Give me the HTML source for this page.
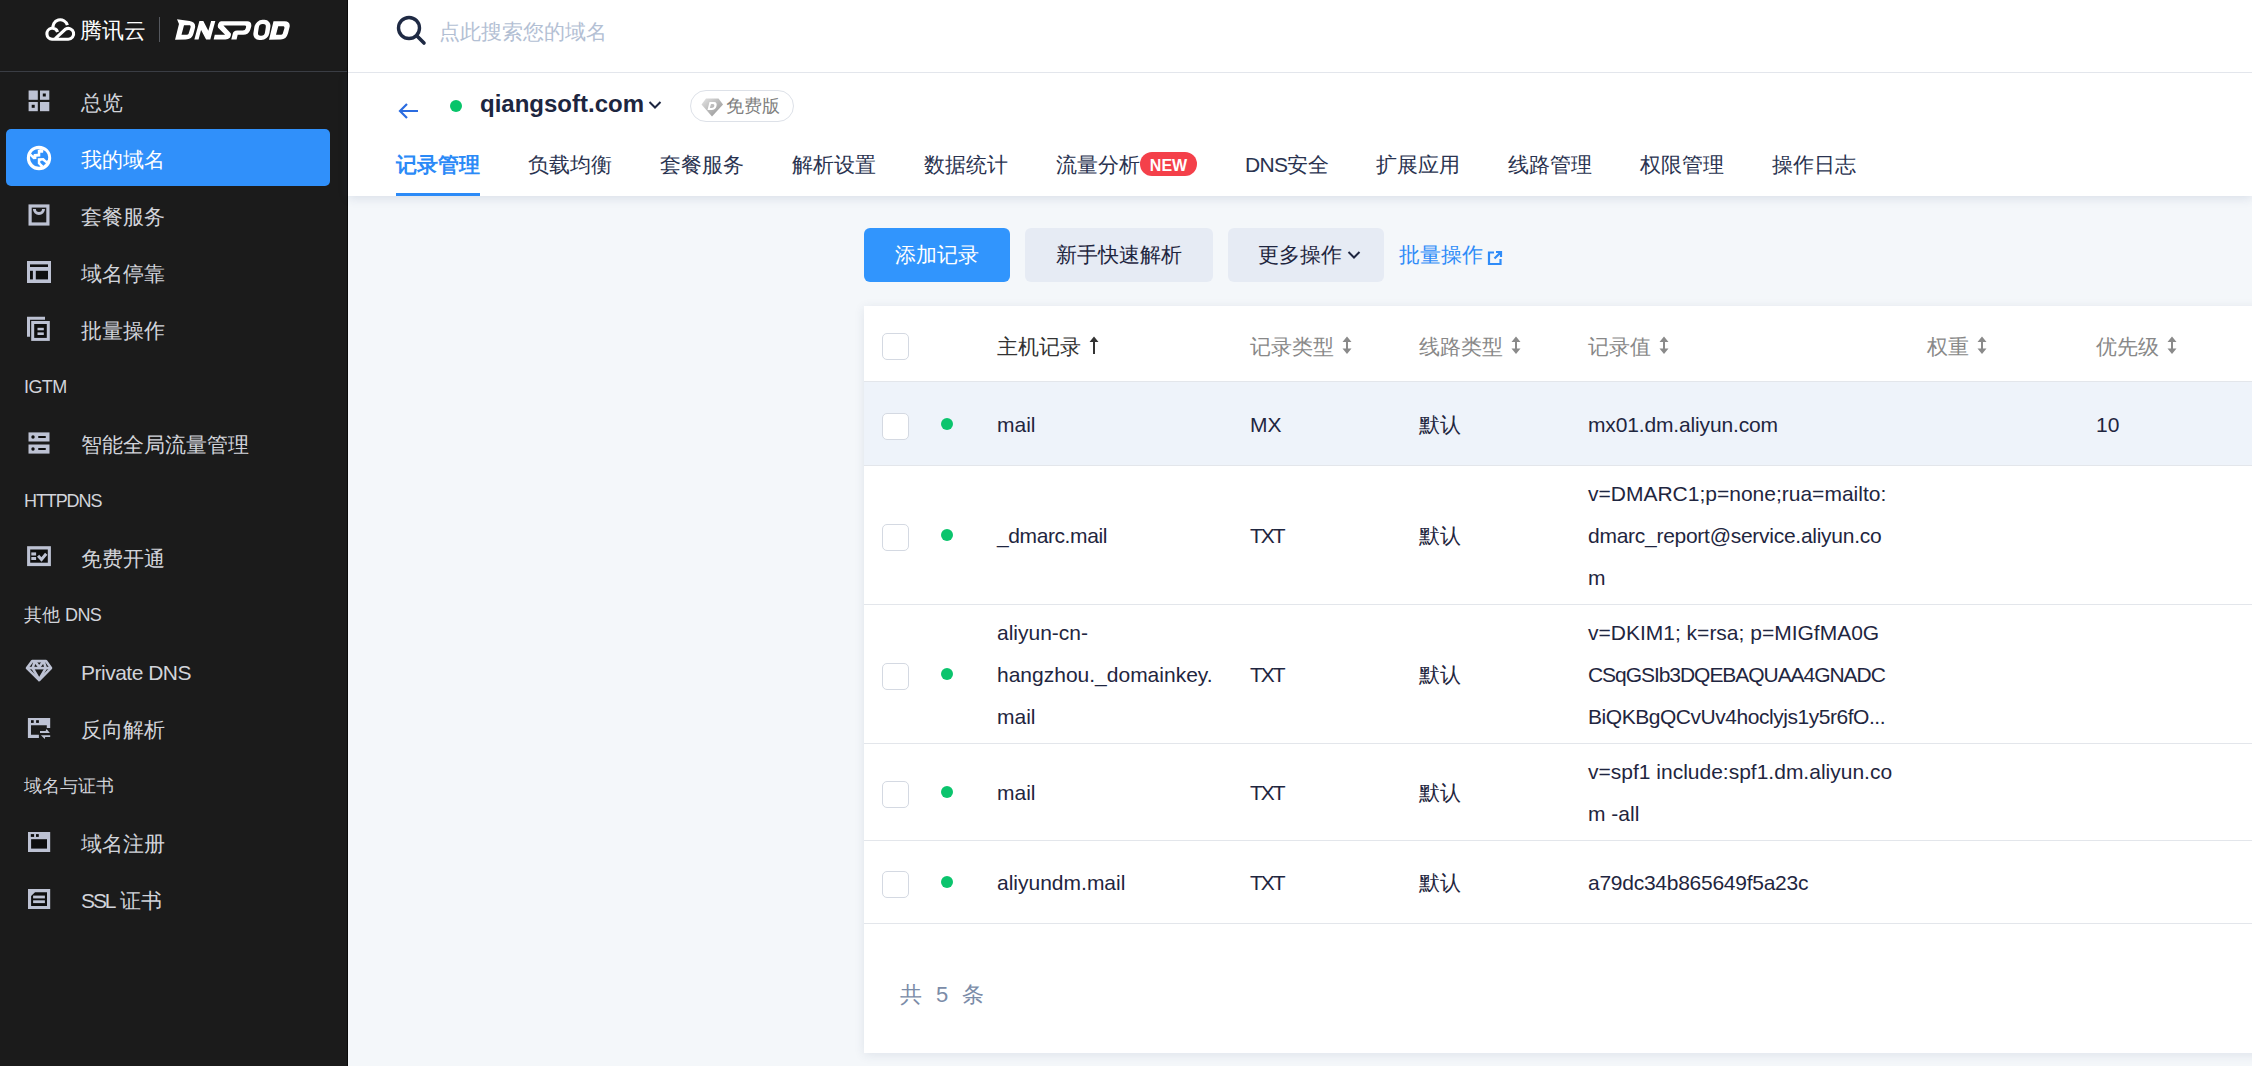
<!DOCTYPE html>
<html><head><meta charset="utf-8">
<style>
*{box-sizing:border-box;margin:0;padding:0}
html,body{width:2252px;height:1066px;overflow:hidden;background:#f4f7fa;font-family:"Liberation Sans",sans-serif}
.abs{position:absolute}
#side{position:absolute;left:0;top:0;width:348px;height:1066px;background:#1b1b1b;border-right:1px solid #0a0a0a}
#side .logo{position:absolute;left:0;top:0;width:347px;height:72px;border-bottom:1px solid #3a3d44}
.mi{position:absolute;left:6px;width:324px;height:57px;color:#d2d4da;font-size:21px;line-height:57px}
.mi .t{position:absolute;left:75px;top:2px}
.mi svg{position:absolute;left:20px;top:17px}
.mi.act{background:#3090fa;border-radius:5px;color:#fff}
.sec{position:absolute;left:24px;height:57px;line-height:61px;color:#d2d4da;font-size:18px}
#top{position:absolute;z-index:2;left:348px;top:0;right:0;height:73px;background:#fff;border-bottom:1px solid #e3e6ec}
#hdr{position:absolute;left:348px;top:73px;right:0;height:123px;background:#fff;box-shadow:0 2px 10px rgba(50,70,120,.14)}
.tab{position:absolute;top:72px;font-size:21px;color:#2a3350;line-height:40px;white-space:nowrap}
.tab.act{color:#2b8af7;font-weight:bold}

.btn{position:absolute;top:228px;height:54px;border-radius:6px;font-size:21px;line-height:54px;white-space:nowrap}
#card{position:absolute;left:864px;top:306px;width:1400px;height:747px;background:#fff;box-shadow:0 2px 10px rgba(40,60,100,.10)}
.hl{position:absolute;left:0;right:0;height:1px;background:#e3e6eb}
.cb{position:absolute;left:18px;width:27px;height:27px;border:1px solid #d4d9e2;border-radius:5px;background:#fff}
.dot{position:absolute;left:77px;width:12px;height:12px;border-radius:50%;background:#0bc46d}
.th{position:absolute;top:25px;font-size:21px;line-height:32px;color:#888;white-space:nowrap}
.td{position:absolute;font-size:21px;line-height:42px;color:#1f2640;white-space:nowrap}
.srt{display:inline-block;vertical-align:top;margin-left:8px;margin-top:5px}
</style></head><body>
<div id="side">
 <div class="logo">
  <svg class="abs" style="left:40px;top:14px" width="40" height="32" viewBox="0 0 40 32"><path d="M17.6 17.9 A5.5 5.5 0 1 0 12 25.2 L28.2 25.2 A5.4 5.4 0 1 0 25.6 15.1 L15.2 24.6 M13.2 15.2 A7.3 7.3 0 1 1 27.4 11.2" fill="none" stroke="#fff" stroke-width="3.1"/></svg>
  <div class="abs" style="left:80px;top:15px;color:#fff;font-size:22px;line-height:32px">腾讯云</div>
  <div class="abs" style="left:159px;top:17px;width:1px;height:25px;background:#55585e"></div>
  <svg class="abs" style="left:170px;top:12px" width="126" height="34" viewBox="0 0 2252 608"><path fill="#fff" fill-rule="evenodd" d="M125,128 L350,160 Q470,180 445,290 L420,385 Q395,490 280,492 L90,495 L160,215 Z M250,235 L355,235 Q375,240 365,280 L330,395 Q320,405 300,405 L205,405 Z
M435,492 L525,162 L595,162 L685,335 L735,162 L810,162 L720,492 L645,492 L555,320 L510,492 Z
M915,165 L1160,165 L1140,240 L955,240 L1085,380 Q1100,410 1070,460 Q1040,492 990,492 L780,492 L800,405 L985,405 L860,280 Q845,250 865,205 Q885,165 915,165 Z
M1160,165 L1380,165 Q1470,170 1450,270 L1430,330 Q1400,405 1310,405 L1210,405 L1190,492 L1095,492 L1120,395 Q1130,330 1200,330 L1300,330 Q1345,330 1355,290 L1360,265 Q1365,240 1335,240 L1140,240 Z
M1850,165 L2050,165 Q2150,170 2140,260 L2110,380 Q2080,492 1980,492 L1770,495 Z M1935,255 L2030,255 Q2050,260 2045,290 L2015,390 Q2005,405 1985,405 L1895,405 Z"/><g transform="translate(1643,320) skewX(-9)"><rect x="-143" y="-180" width="286" height="360" rx="125" fill="#fff"/><rect x="-62" y="-104" width="124" height="208" rx="58" fill="#1b1b1b"/></g></svg>
 </div>
  <div class="mi" style="top:72px"><span class="t">总览</span></div>
 <div class="mi act" style="top:129px"><span class="t">我的域名</span></div>
 <div class="mi" style="top:186px"><span class="t">套餐服务</span></div>
 <div class="mi" style="top:243px"><span class="t">域名停靠</span></div>
 <div class="mi" style="top:300px"><span class="t">批量操作</span></div>
 <div class="sec" style="top:357px" ><span style="letter-spacing:-0.6px">IGTM</span></div>
 <div class="mi" style="top:414px"><span class="t">智能全局流量管理</span></div>
 <div class="sec" style="top:471px"><span style="letter-spacing:-1.1px">HTTPDNS</span></div>
 <div class="mi" style="top:528px"><span class="t">免费开通</span></div>
 <div class="sec" style="top:585px">其他 <span style="letter-spacing:-0.6px">DNS</span></div>
 <div class="mi" style="top:642px"><span class="t" style="letter-spacing:-0.5px">Private DNS</span></div>
 <div class="mi" style="top:699px"><span class="t">反向解析</span></div>
 <div class="sec" style="top:756px">域名与证书</div>
 <div class="mi" style="top:813px"><span class="t">域名注册</span></div>
 <div class="mi" style="top:870px"><span class="t"><span style="letter-spacing:-2.1px">SSL</span> 证书</span></div>
<svg class="abs" style="left:0;top:0" width="348" height="1066" viewBox="0 0 348 1066">
<g fill="#bdc2d3">
 <rect x="28.6" y="90.5" width="9.2" height="9.3"/><rect x="40" y="90.5" width="9.3" height="9.3"/><rect x="28.6" y="102" width="9.2" height="9.2"/><rect x="40" y="102" width="9.3" height="9.2"/>
</g>
<rect x="42.8" y="93.5" width="3" height="3" fill="#0e0e0e"/><rect x="31.7" y="104.8" width="3" height="3" fill="#0e0e0e"/>
<circle cx="39" cy="158" r="10.6" fill="none" stroke="#fff" stroke-width="3.2"/>
<circle cx="39" cy="158" r="9.3" fill="#fff"/>
<g transform="translate(24,143)" fill="#3090fa">
 <path d="M7,10.4 L9.3,12.7 L9.9,11 L13.8,10.7 L13.8,7 L16.6,6.5 A9 9 0 0 0 7,10.4 Z"/>
 <path d="M19.4,7 L19.1,9.85 L16.3,9.7 L16.3,13.5 L12.4,13.8 L12.4,16 L9.3,16.2 L6.2,12.9 A9 9 0 0 0 16.6,23.6 L13.8,20.8 L13.8,15.2 L19.7,14.9 L22.5,17.7 L23.9,16.9 A9 9 0 0 0 19.4,7 Z"/>
 <path d="M16.3,18 L18.3,17.5 L22,20.3 L19.4,22.8 L16.3,19.7 Z"/>
</g>
<rect x="30.1" y="206" width="17.8" height="18" fill="none" stroke="#bdc2d3" stroke-width="3.2"/>
<path d="M34.4,209 A4.55 4.55 0 0 0 43.5,209" fill="none" stroke="#bdc2d3" stroke-width="3"/>
<rect x="27" y="261" width="24" height="22" fill="#bdc2d3"/>
<rect x="30" y="264.4" width="18" height="2.6" fill="#0e0e0e"/>
<rect x="30" y="270.8" width="2.9" height="8.6" fill="#0e0e0e"/>
<rect x="35.8" y="270.8" width="12.2" height="8.6" fill="#0e0e0e"/>
<path d="M28.5,336.7 V318.3 H45" fill="none" stroke="#bdc2d3" stroke-width="3"/>
<rect x="32.7" y="322.5" width="15.6" height="16.9" fill="#0e0e0e" stroke="#bdc2d3" stroke-width="3"/>
<rect x="37.5" y="327.8" width="6.3" height="2.5" fill="#bdc2d3"/><rect x="37.5" y="332.4" width="6.3" height="2.6" fill="#bdc2d3"/>
<rect x="28.5" y="432.4" width="21" height="9.1" fill="#bdc2d3"/><rect x="28.5" y="444.5" width="21" height="9.1" fill="#bdc2d3"/>
<circle cx="33" cy="437" r="1.7" fill="#0e0e0e"/><circle cx="33" cy="449" r="1.7" fill="#0e0e0e"/>
<rect x="38" y="436" width="8" height="2" rx="1" fill="#0e0e0e"/><rect x="38" y="448" width="8" height="2" rx="1" fill="#0e0e0e"/>
<rect x="27.1" y="546.2" width="23.8" height="19.9" fill="#bdc2d3"/>
<rect x="30.2" y="549.5" width="17.6" height="13.2" fill="#0e0e0e"/>
<rect x="31.3" y="552.4" width="4.8" height="3.1" fill="#bdc2d3"/><rect x="31.3" y="557" width="4.8" height="3" fill="#bdc2d3"/>
<path d="M38.1,555.8 L41.5,559.5 L46.2,553.8" fill="none" stroke="#bdc2d3" stroke-width="3"/>
<g transform="translate(24,656)" fill="none" stroke="#bdc2d3" stroke-width="2.6" stroke-linejoin="round">
 <path d="M8.2,5.1 H22 L27,12.1 L15.2,24.2 L3,12.1 Z"/>
 <path d="M3.5,12.1 H26.5"/>
 <path d="M10.8,5.1 L8.6,12.1 L15.2,23.5 L21.8,12.1 L19.6,5.1 M10.8,5.1 L15.2,11 L19.6,5.1"/>
</g>
<g transform="translate(24,713)">
 <path d="M3.9,4.9 H26.2 V14.9 H22.8 V12.2 H7 V21.7 H14.9 V24.9 H3.9 Z" fill="#bdc2d3"/>
 <rect x="7" y="7.2" width="2.7" height="2.7" fill="#0e0e0e"/><rect x="12.1" y="7.2" width="2.8" height="2.7" fill="#0e0e0e"/>
 <path d="M16,18 H21.6 L22.5,15.9 L25.9,19.9 H16 Z" fill="#bdc2d3"/>
 <path d="M16.9,22.2 H26.2 V23.9 H21.2 L20.8,25.9 Z" fill="#bdc2d3"/>
</g>
<rect x="28" y="832" width="22.2" height="20" fill="#bdc2d3"/>
<rect x="31.1" y="839.2" width="15.9" height="9.4" fill="#0e0e0e"/>
<rect x="30.8" y="834.1" width="3.3" height="2.8" fill="#0e0e0e"/><rect x="36" y="834.1" width="2.8" height="2.8" fill="#0e0e0e"/>
<rect x="28" y="889" width="22.2" height="20" fill="#bdc2d3"/>
<path d="M31.1,896 L35,892.3 H47 V905.9 H31.1 Z" fill="#0e0e0e"/>
<rect x="33.1" y="895.6" width="11.8" height="2.8" fill="#bdc2d3"/><rect x="33.1" y="900.3" width="11.8" height="2.8" fill="#bdc2d3"/>
</svg>
</div>

<div id="top">
 <svg class="abs" style="left:48px;top:15px" width="32" height="32" viewBox="0 0 32 32"><circle cx="13" cy="13" r="10.5" fill="none" stroke="#1f2a44" stroke-width="3.4"/><path d="M21 21 L28 28" stroke="#1f2a44" stroke-width="3.6" stroke-linecap="round"/></svg>
 <div class="abs" style="left:91px;top:17px;font-size:21px;line-height:30px;color:#b3c0d4">点此搜索您的域名</div>
</div>

<div id="hdr">
 <svg class="abs" style="left:50px;top:29px" width="22" height="18" viewBox="0 0 22 18"><path d="M2 9 H20 M9 2 L2 9 L9 16" fill="none" stroke="#2b6ce0" stroke-width="2.2"/></svg>
 <div class="abs" style="left:102px;top:27px;width:12px;height:12px;border-radius:50%;background:#08c46a"></div>
 <div class="abs" style="left:132px;top:14px;font-size:24px;line-height:34px;font-weight:bold;color:#1d2640">qiangsoft.com</div>
 <svg class="abs" style="left:300px;top:27px" width="14" height="10" viewBox="0 0 14 10"><path d="M1.5 2 L7 7.5 L12.5 2" fill="none" stroke="#1d2640" stroke-width="2"/></svg>
 <div class="abs" style="left:342px;top:17px;width:104px;height:32px;border:1px solid #dde1e8;border-radius:16px"></div>
 <svg class="abs" style="left:353px;top:25px" width="23" height="19" viewBox="0 0 23 19"><defs><linearGradient id="dg" x1="0" y1="0" x2="1" y2="1"><stop offset="0" stop-color="#e4e4e4"/><stop offset="1" stop-color="#8e8e8e"/></linearGradient></defs><path d="M5 0.5 H17.5 L22 6.5 L11 18.5 L0.5 6.5 Z" fill="url(#dg)"/><path d="M8.5 4 H13 C15.5 4 16 6 15.5 8 C15 10.5 13 12 10.5 12 H6.5 Z M10 6 L8.8 10 H10.5 C12 10 13 9 13.3 8 C13.5 6.8 13 6 12 6 Z" fill="#fff" fill-rule="evenodd"/></svg>
 <div class="abs" style="left:378px;top:19px;font-size:18px;line-height:28px;color:#808080">免费版</div>
 <div class="tab act" style="left:48px">记录管理</div>
 <div class="abs" style="left:48px;top:120px;width:84px;height:3px;background:#2b8af7"></div>
 <div class="tab" style="left:180px">负载均衡</div>
 <div class="tab" style="left:312px">套餐服务</div>
 <div class="tab" style="left:444px">解析设置</div>
 <div class="tab" style="left:576px">数据统计</div>
 <div class="tab" style="left:708px">流量分析</div>
 <div class="abs" style="left:792px;top:79px;width:57px;height:24px;border-radius:12px;background:#f4404a;color:#fff;font-weight:bold;font-size:16px;line-height:28px;text-align:center">NEW</div>
 <div class="tab" style="left:897px"><span style="letter-spacing:-0.7px">DNS</span>安全</div>
 <div class="tab" style="left:1028px">扩展应用</div>
 <div class="tab" style="left:1160px">线路管理</div>
 <div class="tab" style="left:1292px">权限管理</div>
 <div class="tab" style="left:1424px">操作日志</div>
</div>

<div class="btn" style="left:864px;width:146px;background:#3195fd;color:#fff;text-align:center">添加记录</div>
<div class="btn" style="left:1025px;width:188px;background:#e6ebf4;color:#1f2640;text-align:center">新手快速解析</div>
<div class="btn" style="left:1228px;width:156px;background:#e6ebf4;color:#1f2640"><span style="position:absolute;left:30px">更多操作</span><svg class="abs" style="left:119px;top:22px" width="14" height="10" viewBox="0 0 14 10"><path d="M1.5 2 L7 7.5 L12.5 2" fill="none" stroke="#1f2640" stroke-width="2"/></svg></div>
<div class="btn" style="left:1399px;color:#2f8cf8">批量操作<svg class="abs" style="left:88px;top:22px" width="16" height="16" viewBox="0 0 16 16"><path d="M7 2.5 H2 V14 H13.5 V9 M9 2 H14 V7 M14 2 L7.5 8.5" fill="none" stroke="#2f8cf8" stroke-width="2.2"/></svg></div>

<div id="card">
 <div class="cb" style="top:27px"></div>
 <div class="th" style="left:133px;color:#333">主机记录<svg class="srt" width="10" height="19" viewBox="0 0 10 19"><path d="M5 0.5 L9.5 6 H6 V18 H4 V6 H0.5 Z" fill="#333"/></svg></div>
 <div class="th" style="left:386px">记录类型<svg class="srt" width="10" height="19" viewBox="0 0 10 19"><path d="M5 0.5 L9.5 6 H6 V12.5 H9.5 L5 18 L0.5 12.5 H4 V6 H0.5 Z" fill="#8a8a8a"/></svg></div>
 <div class="th" style="left:555px">线路类型<svg class="srt" width="10" height="19" viewBox="0 0 10 19"><path d="M5 0.5 L9.5 6 H6 V12.5 H9.5 L5 18 L0.5 12.5 H4 V6 H0.5 Z" fill="#8a8a8a"/></svg></div>
 <div class="th" style="left:724px">记录值<svg class="srt" width="10" height="19" viewBox="0 0 10 19"><path d="M5 0.5 L9.5 6 H6 V12.5 H9.5 L5 18 L0.5 12.5 H4 V6 H0.5 Z" fill="#8a8a8a"/></svg></div>
 <div class="th" style="left:1063px">权重<svg class="srt" width="10" height="19" viewBox="0 0 10 19"><path d="M5 0.5 L9.5 6 H6 V12.5 H9.5 L5 18 L0.5 12.5 H4 V6 H0.5 Z" fill="#8a8a8a"/></svg></div>
 <div class="th" style="left:1232px">优先级<svg class="srt" width="10" height="19" viewBox="0 0 10 19"><path d="M5 0.5 L9.5 6 H6 V12.5 H9.5 L5 18 L0.5 12.5 H4 V6 H0.5 Z" fill="#8a8a8a"/></svg></div>
 <div class="hl" style="top:75px"></div>
 <div class="abs" style="left:0;top:76px;width:1400px;height:83px;background:#eef3fa"></div>
 <div class="cb" style="top:107px"></div><div class="dot" style="top:112px"></div>
 <div class="td" style="left:133px;top:98px">mail</div>
 <div class="td" style="left:386px;top:98px">MX</div>
 <div class="td" style="left:555px;top:98px">默认</div>
 <div class="td" style="left:724px;top:98px;letter-spacing:-0.15px">mx01.dm.aliyun.com</div>
 <div class="td" style="left:1232px;top:98px">10</div>
 <div class="hl" style="top:159px"></div>

 <div class="cb" style="top:218px"></div><div class="dot" style="top:223px"></div>
 <div class="td" style="left:133px;top:209px;letter-spacing:-0.4px">_dmarc.mail</div>
 <div class="td" style="left:386px;top:209px;letter-spacing:-2px">TXT</div>
 <div class="td" style="left:555px;top:209px">默认</div>
 <div class="td" style="left:724px;top:167px">v=DMARC1;p=none;rua=mailto:<br><span style="letter-spacing:-0.27px">dmarc_report@service.aliyun.co</span><br>m</div>
 <div class="hl" style="top:298px"></div>

 <div class="cb" style="top:357px"></div><div class="dot" style="top:362px"></div>
 <div class="td" style="left:133px;top:306px">aliyun-cn-<br>hangzhou._domainkey.<br>mail</div>
 <div class="td" style="left:386px;top:348px;letter-spacing:-2px">TXT</div>
 <div class="td" style="left:555px;top:348px">默认</div>
 <div class="td" style="left:724px;top:306px">v=DKIM1; k=rsa; p=MIGfMA0G<br><span style="letter-spacing:-1.05px">CSqGSIb3DQEBAQUAA4GNADC</span><br><span style="letter-spacing:-0.46px">BiQKBgQCvUv4hoclyjs1y5r6fO...</span></div>
 <div class="hl" style="top:437px"></div>

 <div class="cb" style="top:475px"></div><div class="dot" style="top:480px"></div>
 <div class="td" style="left:133px;top:466px">mail</div>
 <div class="td" style="left:386px;top:466px;letter-spacing:-2px">TXT</div>
 <div class="td" style="left:555px;top:466px">默认</div>
 <div class="td" style="left:724px;top:445px">v=spf1 include:spf1.dm.aliyun.co<br>m -all</div>
 <div class="hl" style="top:534px"></div>

 <div class="cb" style="top:565px"></div><div class="dot" style="top:570px"></div>
 <div class="td" style="left:133px;top:556px">aliyundm.mail</div>
 <div class="td" style="left:386px;top:556px;letter-spacing:-2px">TXT</div>
 <div class="td" style="left:555px;top:556px">默认</div>
 <div class="td" style="left:724px;top:556px;letter-spacing:-0.26px">a79dc34b865649f5a23c</div>
 <div class="hl" style="top:617px"></div>

 <div class="abs" style="left:36px;top:673px;font-size:22px;line-height:32px;color:#7b8ca8;white-space:nowrap">共<span style="margin-left:14px">5</span><span style="margin-left:14px">条</span></div>
</div>
</body></html>
